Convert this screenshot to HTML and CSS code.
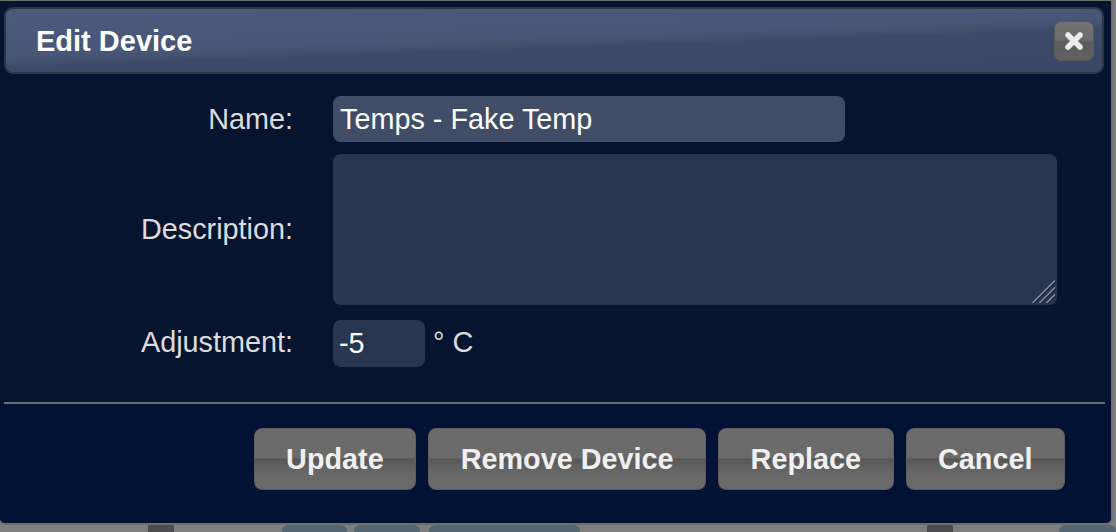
FILE: index.html
```html
<!DOCTYPE html>
<html lang="en">
<head>
<meta charset="utf-8">
<title>Edit Device</title>
<link rel="stylesheet" href="styles.css">
</head>
<body>
<div class="dialog">
  <div class="titlebar">
    <span class="title">Edit Device</span>
    <button class="close" type="button" aria-label="close">
      <svg width="22" height="22" viewBox="0 0 22 22"><path d="M5 5 L17 17 M17 5 L5 17" stroke="#ececec" stroke-width="5.5" stroke-linecap="round" fill="none"/></svg>
    </button>
  </div>
  <div class="content">
    <div class="form">
      <label class="lbl" for="name">Name:</label>
      <div class="field"><input id="name" class="inp inp-name" type="text" value="Temps - Fake Temp"></div>
      <label class="lbl" for="desc">Description:</label>
      <div class="field ta-wrap">
        <textarea id="desc" class="ta"></textarea>
        <svg class="grip" width="28" height="28" viewBox="0 0 28 28">
          <g stroke-width="1.6" fill="none">
            <path d="M28 5 L5 28 M28 12 L12 28 M28 19 L19 28 M28 26 L26 28" stroke="#1a2334"/>
            <path d="M27 4.5 L4.5 27 M27 11.5 L11.5 27 M27 18.5 L18.5 27" stroke="#858d9b"/>
          </g>
        </svg>
      </div>
      <label class="lbl" for="adj">Adjustment:</label>
      <div class="field adj-row"><input id="adj" class="inp inp-adj" type="text" value="-5"><span class="unit">° C</span></div>
    </div>
  </div>
  <div class="footer">
    <div class="rule"></div>
    <div class="buttons">
      <button class="btn" type="button">Update</button>
      <button class="btn" type="button">Remove Device</button>
      <button class="btn" type="button">Replace</button>
      <button class="btn" type="button">Cancel</button>
    </div>
  </div>
</div>
<div class="behind">
  <span class="blk dark b1"></span>
  <span class="blk tab t1"></span>
  <span class="blk tab t2"></span>
  <span class="blk tab t3"></span>
  <span class="blk dark b2"></span>
  <span class="blk tab t4"></span>
</div>
</body>
</html>
```

FILE: styles.css
```css
html, body {
  margin: 0;
  padding: 0;
}

body {
  width: 1116px;
  height: 532px;
  overflow: hidden;
  background: #7e7e7e;
  font-family: "Liberation Sans", Arial, sans-serif;
}

.dialog {
  box-sizing: border-box;
  width: 1115px;
  margin-left: -2px;
  border: 2px solid #6f6f6f;
  border-top-width: 1px;
  border-radius: 0 0 7px 7px;
  background: #07142f;
  overflow: hidden;
}

.titlebar {
  box-sizing: border-box;
  height: 67px;
  margin: 6px 7px 0 4px;
  border: 2px solid #2f3542;
  border-radius: 9px;
  background: linear-gradient(178deg, #4b5a7a 0%, #485777 46%, #44536f 52%, #3c4968 58%, #3a4766 100%);
  display: flex;
  align-items: center;
  justify-content: space-between;
  padding: 0 8px 0 30px;
}

.title {
  color: #ffffff;
  font-weight: bold;
  font-size: 29px;
  line-height: 1;
  margin-top: 2px;
}

.close {
  box-sizing: border-box;
  width: 40px;
  height: 40px;
  margin-top: 1px;
  padding: 0;
  border: 1px solid #575757;
  border-radius: 7px;
  background: linear-gradient(180deg, #727272 0%, #6c6c6c 48%, #5c5c5c 52%, #616161 100%);
  display: flex;
  align-items: center;
  justify-content: center;
}

.close svg {
  display: block;
}

.content {
  padding: 22px 0 35px 0;
}

.form {
  display: grid;
  grid-template-columns: 293px auto;
  column-gap: 40px;
  row-gap: 12px;
  align-items: center;
}

.lbl {
  text-align: right;
  color: #dcdcdc;
  font-size: 28.8px;
  line-height: 1;
}

.field {
  display: flex;
  align-items: center;
}

.inp, .ta {
  box-sizing: border-box;
  border: 0;
  outline: none;
  margin: 0;
  font-family: "Liberation Sans", Arial, sans-serif;
  font-size: 28.8px;
  color: #ffffff;
  border-radius: 8px;
}

.inp-name {
  width: 512px;
  height: 46px;
  padding: 0 7px;
  background: #414d66;
}

.ta-wrap {
  position: relative;
  width: 724px;
}

.ta {
  display: block;
  width: 724px;
  height: 151px;
  padding: 6px 7px;
  background: #28364f;
  resize: none;
}

.grip {
  position: absolute;
  right: 1px;
  bottom: 1px;
}

.adj-row {
  margin-top: 3px;
  gap: 8px;
}

.inp-adj {
  width: 92px;
  height: 47px;
  padding: 0 6px;
  background: #28364f;
}

.unit {
  color: #dcdcdc;
  font-size: 28.8px;
  line-height: 1;
  margin-top: -3px;
}

.footer {
  background: #011235;
}

.rule {
  height: 2px;
  margin: 0 6px 0 4px;
  background: #6f6f6f;
}

.buttons {
  display: flex;
  justify-content: flex-end;
  gap: 12px;
  padding: 24px 46px 33px 0;
}

.btn {
  box-sizing: border-box;
  height: 62px;
  margin: 0;
  padding: 0 31.5px;
  border: 1px solid #5c5c5c;
  border-radius: 8px;
  background: linear-gradient(180deg, #6c6c6c 0%, #6a6a6a 48%, #565656 50%, #5f5f5f 60%, #686868 75%, #6a6a6a 100%);
  color: #f0f0f0;
  font-family: "Liberation Sans", Arial, sans-serif;
  font-weight: bold;
  font-size: 28.8px;
  line-height: 1;
}

.behind {
  display: flex;
  height: 7px;
}

.blk {
  display: block;
  height: 7px;
}

.dark {
  background: #4c4c4e;
  width: 27px;
}

.tab {
  background: #566670;
  border-radius: 6px 6px 0 0;
}

.b1 { margin-left: 148px; }
.t1 { margin-left: 108px; width: 68px; }
.t2 { margin-left: 7px; width: 69px; }
.t3 { margin-left: 9px; width: 157px; }
.b2 { margin-left: 347px; }
.t4 { margin-left: 106px; width: 60px; }
```
